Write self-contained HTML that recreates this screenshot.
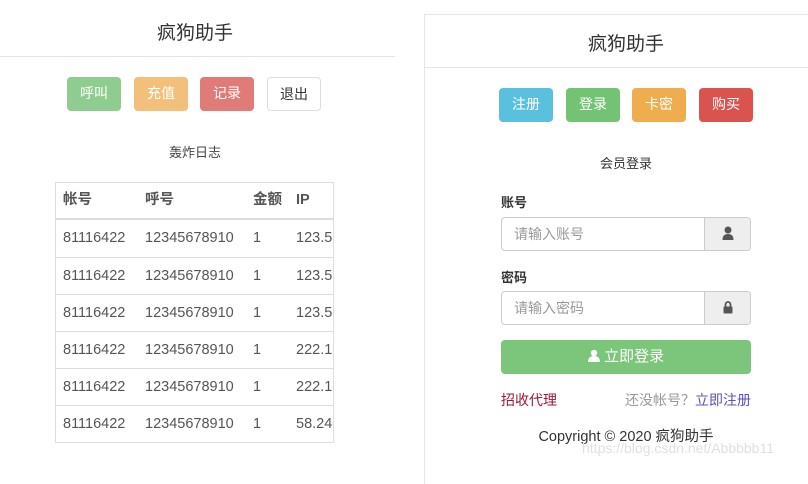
<!DOCTYPE html><html><head><meta charset="utf-8"><style>
*{box-sizing:border-box;margin:0;padding:0}
body{width:808px;height:469px;background:#fff;font-family:"Liberation Sans","Noto Sans CJK SC",sans-serif;color:#333;position:relative;overflow:hidden;font-size:14px}
.a{position:absolute}
.btn{position:absolute;height:34px;width:54px;border-radius:4px;color:#fff;font-size:14px;text-align:center;line-height:33px}
.t{position:absolute;font-size:14px}
.row{position:absolute;left:55px;width:279px;border-top:1px solid #ddd;height:37px;line-height:37px;font-size:14.5px;color:#555}
.row span{position:absolute;white-space:nowrap}
.inp{position:absolute;left:501px;width:250px;height:34px;border:1px solid #ccc;border-radius:4px}
.inp .ph{position:absolute;left:12px;top:0;line-height:32px;color:#999;font-size:14px}
.inp .ad{position:absolute;right:0;top:0;width:46px;height:32px;background:#eee;border-left:1px solid #ccc;border-radius:0 3px 3px 0}
</style></head><body>
<div class="t" style="left:0;width:390px;top:18px;text-align:center;font-size:19px">疯狗助手</div>
<div class="a" style="left:0;top:56px;width:395px;border-top:1px solid #e5e5e5"></div>
<div class="btn" style="left:67px;top:77px;background:#8fcc8f">呼叫</div>
<div class="btn" style="left:134px;top:77px;background:#f2c07a">充值</div>
<div class="btn" style="left:200px;top:77px;background:#e17b78">记录</div>
<div class="btn" style="left:267px;top:77px;background:#fff;border:1px solid #ddd;color:#333">退出</div>
<div class="t" style="left:0;width:390px;top:142px;text-align:center;font-size:13px;color:#444">轰炸日志</div>
<div class="a" style="left:55px;top:182px;width:279px;height:261px;border:1px solid #ddd;overflow:hidden"></div>
<div class="row" style="top:182px;border-top:none;font-weight:bold;color:#555;height:37px"><span style="left:8px">帐号</span><span style="left:90px">呼号</span><span style="left:198px">金额</span><span style="left:241px">IP</span></div>
<div class="a" style="left:55px;top:218px;width:279px;border-top:2px solid #ddd"></div>
<div class="a" style="left:55px;top:220px;width:278px;height:222px;overflow:hidden">
<div class="row" style="top:0;left:0;border-top:none"><span style="left:8px">81116422</span><span style="left:90px">12345678910</span><span style="left:198px">1</span><span style="left:241px">123.56</span></div>
<div class="row" style="top:37px;left:0"><span style="left:8px">81116422</span><span style="left:90px">12345678910</span><span style="left:198px">1</span><span style="left:241px">123.56</span></div>
<div class="row" style="top:74px;left:0"><span style="left:8px">81116422</span><span style="left:90px">12345678910</span><span style="left:198px">1</span><span style="left:241px">123.56</span></div>
<div class="row" style="top:111px;left:0"><span style="left:8px">81116422</span><span style="left:90px">12345678910</span><span style="left:198px">1</span><span style="left:241px">222.18</span></div>
<div class="row" style="top:148px;left:0"><span style="left:8px">81116422</span><span style="left:90px">12345678910</span><span style="left:198px">1</span><span style="left:241px">222.18</span></div>
<div class="row" style="top:185px;left:0"><span style="left:8px">81116422</span><span style="left:90px">12345678910</span><span style="left:198px">1</span><span style="left:241px">58.248</span></div>
</div>

<div class="a" style="left:424px;top:14px;width:390px;height:470px;border-left:1px solid #e5e5e5;border-top:1px solid #e5e5e5"></div>
<div class="t" style="left:424px;width:404px;top:29px;text-align:center;font-size:19px">疯狗助手</div>
<div class="a" style="left:425px;top:67px;width:383px;border-top:1px solid #e5e5e5"></div>
<div class="btn" style="left:499px;top:88px;background:#5bc0de">注册</div>
<div class="btn" style="left:566px;top:88px;background:#74c374">登录</div>
<div class="btn" style="left:632px;top:88px;background:#f0ad4e">卡密</div>
<div class="btn" style="left:699px;top:88px;background:#d9534f">购买</div>
<div class="t" style="left:501px;width:250px;top:153px;text-align:center;font-size:13px">会员登录</div>
<div class="t" style="left:501px;top:192px;font-weight:bold;font-size:13px">账号</div>
<div class="inp" style="top:217px"><span class="ph">请输入账号</span><div class="ad"><svg width="46" height="32"><circle cx="23" cy="12" r="3.5" fill="#555"/><path d="M17.5 22q0-6 5.5-6t5.5 6z" fill="#555"/></svg></div></div>
<div class="t" style="left:501px;top:267px;font-weight:bold;font-size:13px">密码</div>
<div class="inp" style="top:291px"><span class="ph">请输入密码</span><div class="ad"><svg width="46" height="32"><path d="M20.5 15v-2.5a2.5 2.5 0 0 1 5 0v2.5" stroke="#555" stroke-width="1.8" fill="none"/><rect x="18.5" y="14.5" width="9" height="7" rx="1" fill="#555"/></svg></div></div>
<div class="a" style="left:501px;top:340px;width:250px;height:34px;background:#7cc67c;border-radius:4px;color:#fff;text-align:center;line-height:33px;font-size:15px"><svg width="12" height="13" style="vertical-align:-1px"><circle cx="6" cy="4" r="3.2" fill="#fff"/><path d="M0 13q0-6 6-6t6 6z" fill="#fff"/></svg> 立即登录</div>
<div class="t" style="left:501px;top:390px;color:#a0163a">招收代理</div>
<div class="t" style="left:501px;width:250px;top:390px;text-align:right;color:#999">还没帐号？<span style="color:#5b4fc6">立即注册</span></div>
<div class="t" style="left:501px;width:250px;top:425px;text-align:center;font-size:14.5px">Copyright © 2020 疯狗助手</div>
<div class="t" style="left:582px;top:440px;color:#e0e0e0;font-size:14px">https://blog.csdn.net/Abbbbb11</div>
</body></html>
